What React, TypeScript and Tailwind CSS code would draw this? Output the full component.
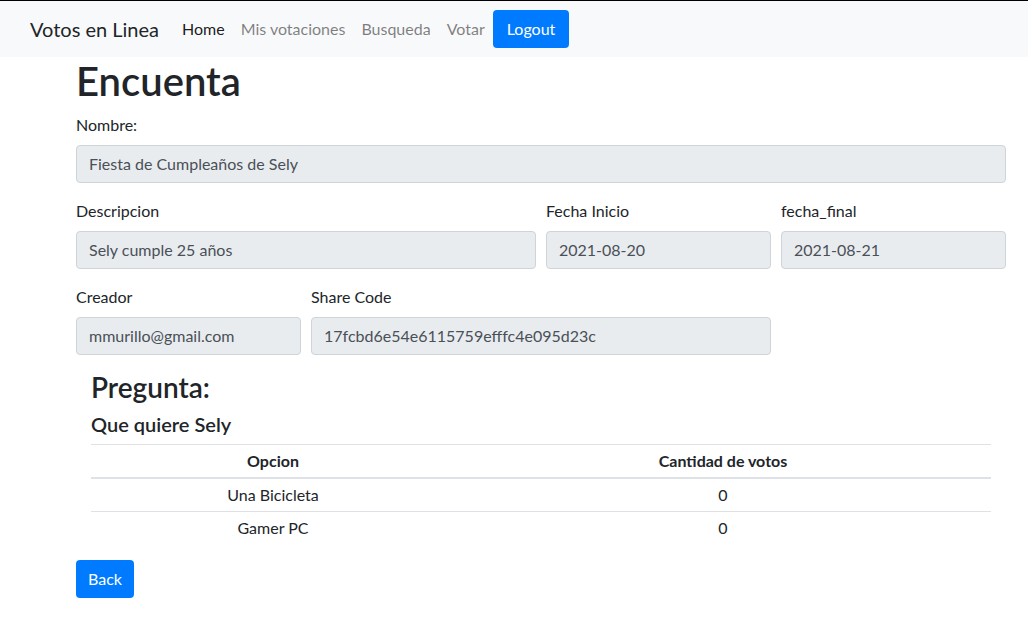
const navLinks = [
  { label: 'Home', active: true },
  { label: 'Mis votaciones', active: false },
  { label: 'Busqueda', active: false },
  { label: 'Votar', active: false },
];

const opciones = [
  { opcion: 'Una Bicicleta', votos: 0 },
  { opcion: 'Gamer PC', votos: 0 },
];

function Field({ label, value, className = '' }: { label: string; value: string; className?: string }) {
  return (
    <div className={`px-[5px] mb-4 ${className}`}>
      <label className="block mb-2 leading-6">{label}</label>
      <div className="h-[38px] px-3 flex items-center bg-[#e9ecef] border border-[#ced4da] rounded text-[#495057] leading-6">
        {value}
      </div>
    </div>
  );
}

export default function App() {
  return (
    <div className="min-h-[637px] bg-white text-[#212529] text-base border-t border-black font-['Lato','Liberation_Sans',sans-serif]">
      <nav className="h-14 bg-[#f8f9fa] flex items-center pl-[30px]">
        <span className="text-xl leading-[30px] mr-[15px] py-[5px]">Votos en Linea</span>
        <div className="flex items-center">
          {navLinks.map((l) => (
            <a
              key={l.label}
              href="#"
              className={`px-2 py-2 leading-6 ${l.active ? 'text-black/90' : 'text-black/50'}`}
            >
              {l.label}
            </a>
          ))}
          <button className="h-[38px] px-[14px] rounded bg-[#007bff] text-white leading-6">Logout</button>
        </div>
      </nav>

      <div className="ml-[76px] w-[930px]">
        <h1 className="text-[40px] leading-[48px] font-semibold mb-2">Encuenta</h1>

        <div className="-mx-[5px] flex flex-wrap">
          <Field label="Nombre:" value="Fiesta de Cumpleaños de Sely" className="w-full" />
          <Field label="Descripcion" value="Sely cumple 25 años" className="w-[470px]" />
          <Field label="Fecha Inicio" value="2021-08-20" className="w-[235px]" />
          <Field label="fecha_final" value="2021-08-21" className="w-[235px]" />
          <Field label="Creador" value="mmurillo@gmail.com" className="w-[235px]" />
          <Field label="Share Code" value="17fcbd6e54e6115759efffc4e095d23c" className="w-[470px]" />
        </div>

        <div className="px-[15px]">
          <h3 className="text-[28px] leading-[33px] font-semibold mb-2">Pregunta:</h3>
          <h5 className="text-xl leading-6 font-semibold mb-2">Que quiere Sely</h5>
          <table className="w-full mb-4 border-collapse">
            <thead>
              <tr>
                <th className="w-[364px] py-1 px-[5px] border-t border-b-2 border-[#dee2e6] font-bold leading-6">Opcion</th>
                <th className="py-1 px-[5px] border-t border-b-2 border-[#dee2e6] font-bold leading-6">Cantidad de votos</th>
              </tr>
            </thead>
            <tbody>
              {opciones.map((o, i) => (
                <tr key={o.opcion}>
                  <td className={`text-center py-1 px-[5px] leading-6 ${i > 0 ? 'border-t border-[#dee2e6]' : ''}`}>{o.opcion}</td>
                  <td className={`text-center py-1 px-[5px] leading-6 ${i > 0 ? 'border-t border-[#dee2e6]' : ''}`}>{o.votos}</td>
                </tr>
              ))}
            </tbody>
          </table>
        </div>

        <button className="h-[38px] px-3 rounded bg-[#007bff] text-white leading-6">Back</button>
      </div>
    </div>
  );
}
